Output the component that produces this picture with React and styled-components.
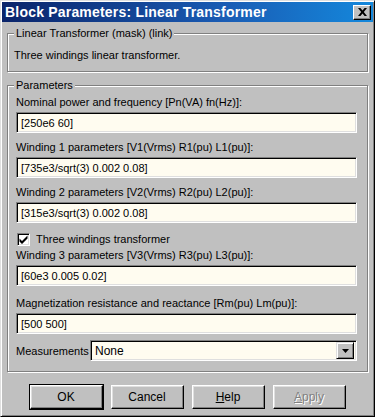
import styled, { createGlobalStyle } from "styled-components";

const GlobalStyle = createGlobalStyle`
  html, body {
    margin: 0;
    padding: 0;
    background: #c0c0c0;
  }
  body {
    font-family: "Liberation Sans", Arial, sans-serif;
    font-size: 11px;
    color: #000;
  }
`;

const fields = [
  { label: "Nominal power and frequency [Pn(VA) fn(Hz)]:", value: "[250e6 60]", gap: 0 },
  { label: "Winding 1 parameters [V1(Vrms) R1(pu) L1(pu)]:", value: "[735e3/sqrt(3) 0.002 0.08]", gap: 7 },
  { label: "Winding 2 parameters [V2(Vrms) R2(pu) L2(pu)]:", value: "[315e3/sqrt(3) 0.002 0.08]", gap: 7 },
];

const moreFields = [
  { label: "Winding 3 parameters [V3(Vrms) R3(pu) L3(pu)]:", value: "[60e3 0.005 0.02]", gap: 2 },
  { label: "Magnetization resistance and reactance [Rm(pu) Lm(pu)]:", value: "[500 500]", gap: 10 },
];

function Field({ label, value, gap }) {
  return (
    <FieldWrap $gap={gap}>
      <Label>{label}</Label>
      <Input>{value}</Input>
    </FieldWrap>
  );
}

export default function App() {
  return (
    <>
      <GlobalStyle />
      <Window>
        <TitleBar>
          <Title>Block Parameters: Linear Transformer</Title>
          <CloseBtn>
            <svg width="9" height="8" viewBox="0 0 9 8">
              <path d="M0 0h2.4L4.5 2.6 6.6 0H9L5.8 4 9 8H6.6L4.5 5.4 2.4 8H0l3.2-4z" fill="#000" />
            </svg>
          </CloseBtn>
        </TitleBar>
        <Body>
          <GroupBox>
            <Legend>Linear Transformer (mask) (link)</Legend>
            <Description>Three windings linear transformer.</Description>
          </GroupBox>
          <GroupBox $top={6}>
            <Legend>Parameters</Legend>
            <Fields>
              {fields.map((f) => (
                <Field key={f.label} {...f} />
              ))}
              <CheckRow>
                <CheckBox>
                  <svg width="9" height="9" viewBox="0 0 9 9">
                    <path d="M0.5 3.5l2.5 2.5L8.5 0.5V3.5L3 9 0.5 6.5z" fill="#000" />
                  </svg>
                </CheckBox>
                Three windings transformer
              </CheckRow>
              {moreFields.map((f) => (
                <Field key={f.label} {...f} />
              ))}
              <SelectRow>
                <SelectLabel>Measurements</SelectLabel>
                <Select>
                  <span>None</span>
                  <DropBtn>
                    <svg width="7" height="4" viewBox="0 0 7 4">
                      <path d="M0 0h7L3.5 4z" fill="#000" />
                    </svg>
                  </DropBtn>
                </Select>
              </SelectRow>
            </Fields>
          </GroupBox>
          <Buttons>
            <Button $default>OK</Button>
            <Button>Cancel</Button>
            <Button>
              <u>H</u>elp
            </Button>
            <Button $disabled>
              <u>A</u>pply
            </Button>
          </Buttons>
        </Body>
      </Window>
    </>
  );
}

const Window = styled.div`
  box-sizing: border-box;
  width: 375px;
  height: 417px;
  padding: 1px;
  background: #c0c0c0;
  border-top: 1px solid #dfdfdf;
  border-left: 1px solid #dfdfdf;
  border-right: 1px solid #000;
  border-bottom: 1px solid #000;
  box-shadow: inset 1px 1px #fff, inset -1px -1px #808080;
  display: flex;
  flex-direction: column;
`;

const TitleBar = styled.div`
  height: 20px;
  flex-shrink: 0;
  display: flex;
  align-items: center;
  justify-content: space-between;
  padding: 0 2px 0 3px;
  background: linear-gradient(to right, #0a246a 0%, #1a5cb4 60%, #1488dc 100%);
`;

const Title = styled.div`
  color: #fff;
  font-weight: bold;
  font-size: 14px;
  letter-spacing: 0.2px;
`;

const CloseBtn = styled.div`
  box-sizing: border-box;
  width: 18px;
  height: 15px;
  display: flex;
  align-items: center;
  justify-content: center;
  background: #c0c0c0;
  border-top: 1px solid #fff;
  border-left: 1px solid #fff;
  border-right: 1px solid #000;
  border-bottom: 1px solid #000;
  box-shadow: inset -1px -1px #808080;
`;

const Body = styled.div`
  display: flex;
  flex-direction: column;
  padding: 4px 5px 0;
`;

const GroupBox = styled.fieldset`
  margin: ${(p) => p.$top || 0}px 0 0;
  padding: 0 0 0 6px;
  min-width: 0;
  border: 1px solid #808080;
  box-shadow: inset 1px 1px #fff, 1px 1px #fff;
`;

const Legend = styled.legend`
  padding: 0 2px;
  line-height: 14px;
  background: #c0c0c0;
`;

const Description = styled.div`
  line-height: 14px;
  margin: 8px 0 9px;
`;

const Fields = styled.div`
  display: flex;
  flex-direction: column;
  padding: 3px 10px 10px 2px;
`;

const FieldWrap = styled.div`
  display: flex;
  flex-direction: column;
  margin-top: ${(p) => p.$gap}px;
`;

const Label = styled.div`
  line-height: 14px;
  margin-bottom: 3px;
`;

const sunken = `
  box-sizing: border-box;
  background: #fffcf0;
  border-top: 1px solid #808080;
  border-left: 1px solid #808080;
  border-right: 1px solid #fff;
  border-bottom: 1px solid #fff;
  box-shadow: inset 1px 1px #000, inset -1px -1px #dfdfdf;
`;

const Input = styled.div`
  ${sunken}
  height: 21px;
  padding: 0 4px;
  display: flex;
  align-items: center;
  white-space: nowrap;
`;

const CheckRow = styled.div`
  display: flex;
  align-items: center;
  gap: 6px;
  height: 14px;
  margin-top: 9px;
  padding-left: 1px;
`;

const CheckBox = styled.div`
  ${sunken}
  background: #fff;
  width: 13px;
  height: 13px;
  display: flex;
  align-items: center;
  justify-content: center;
`;

const SelectRow = styled.div`
  display: flex;
  align-items: center;
  margin-top: 6px;
`;

const SelectLabel = styled.div`
  width: 74px;
`;

const Select = styled.div`
  ${sunken}
  flex: 1;
  height: 21px;
  padding: 2px 2px 2px 4px;
  display: flex;
  align-items: center;
  justify-content: space-between;
  font-size: 12px;
`;

const DropBtn = styled.div`
  box-sizing: border-box;
  width: 18px;
  height: 17px;
  display: flex;
  align-items: center;
  justify-content: center;
  background: #c0c0c0;
  border-top: 1px solid #dfdfdf;
  border-left: 1px solid #dfdfdf;
  border-right: 1px solid #000;
  border-bottom: 1px solid #000;
  box-shadow: inset 1px 1px #fff, inset -1px -1px #808080;
`;

const Buttons = styled.div`
  display: flex;
  justify-content: center;
  gap: 8px;
  margin-top: 13px;
`;

const Button = styled.div`
  box-sizing: border-box;
  width: 73px;
  height: 24px;
  display: flex;
  align-items: center;
  justify-content: center;
  font-size: 12px;
  background: #c0c0c0;
  border-top: 1px solid #fff;
  border-left: 1px solid #fff;
  border-right: 1px solid #000;
  border-bottom: 1px solid #000;
  box-shadow: inset -1px -1px #808080, inset 1px 1px #dfdfdf;
  color: ${(p) => (p.$disabled ? "#808080" : "#000")};
  text-shadow: ${(p) => (p.$disabled ? "1px 1px #fff" : "none")};
  outline: ${(p) => (p.$default ? "1px solid #000" : "none")};
  & u {
    text-decoration-thickness: 1px;
  }
`;
